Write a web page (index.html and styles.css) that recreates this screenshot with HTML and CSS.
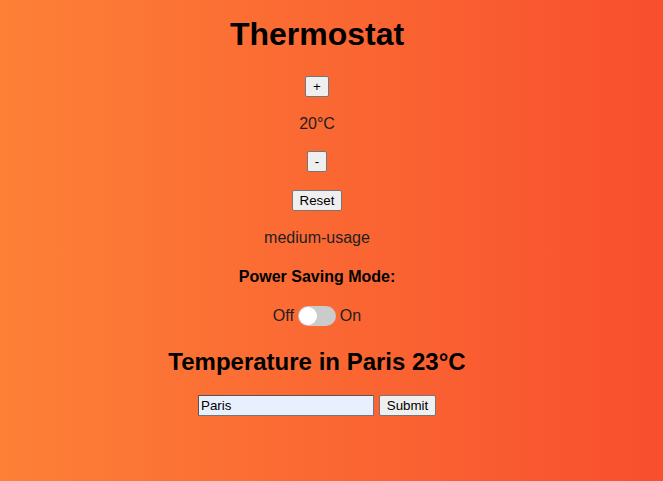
FILE: index.html
```html
<!DOCTYPE html>
<html lang="en">
<head>
<meta charset="utf-8">
<title>Thermostat</title>
<link rel="stylesheet" href="styles.css">
</head>
<body>
<div class="app">
  <h1 class="title">Thermostat</h1>
  <button class="btn btn-plus" type="button">+</button>
  <p class="temp">20°C</p>
  <button class="btn btn-minus" type="button">-</button>
  <button class="btn btn-reset" type="button">Reset</button>
  <p class="usage">medium-usage</p>
  <p class="mode-label">Power Saving Mode:</p>
  <div class="toggle-row">
    <span class="toggle-text">Off</span>
    <span class="switch"><span class="knob"></span></span>
    <span class="toggle-text">On</span>
  </div>
  <h2 class="city-temp">Temperature in Paris 23°C</h2>
  <form class="city-form">
    <input class="city-input" type="text" value="Paris">
    <button class="btn btn-submit" type="button">Submit</button>
  </form>
</div>
</body>
</html>
```
FILE: styles.css
```css
html, body {
  margin: 0;
  padding: 0;
}
body {
  min-height: 100vh;
  background: linear-gradient(to right, #fd8037, #f84f2e);
  font-family: "Liberation Sans", Arial, sans-serif;
  color: #1e1e1e;
}
.app {
  display: flex;
  flex-direction: column;
  align-items: center;
  padding-right: 29px;
  padding-top: 16px;
}
.title {
  margin: 0 0 23px;
  font-size: 32px;
  line-height: 37px;
  font-weight: bold;
  color: #000;
}
.btn {
  font-family: "Liberation Sans", Arial, sans-serif;
  font-size: 13.333px;
  line-height: 15px;
  height: 21px;
  box-sizing: border-box;
  padding: 1px 6px;
  margin: 0;
  color: #000;
  background: #efefef;
  border: 1px solid #767676;
  border-radius: 2px;
}
.btn-plus { width: 24px; padding: 1px 0; }
.btn-minus { width: 20px; padding: 1px 0; margin-top: 18px; }
.btn-reset { width: 50px; padding: 1px 0; margin-top: 18px; }
.temp {
  margin: 18px 0 0;
  font-size: 16px;
  line-height: 18px;
}
.usage {
  margin: 18px 0 0;
  font-size: 16px;
  line-height: 18px;
}
.mode-label {
  margin: 21px 0 0;
  font-size: 16px;
  line-height: 18px;
  font-weight: bold;
  color: #000;
}
.toggle-row {
  margin-top: 20px;
  display: flex;
  align-items: center;
  gap: 4px;
  height: 20px;
}
.toggle-text {
  font-size: 16px;
  line-height: 18px;
}
.switch {
  position: relative;
  display: block;
  width: 38px;
  height: 20px;
  border-radius: 10px;
  background: #cbcbcb;
}
.knob {
  position: absolute;
  left: 1px;
  top: 1px;
  width: 18px;
  height: 18px;
  border-radius: 50%;
  background: #fff;
}
.city-temp {
  margin: 22px 0 0;
  font-size: 24px;
  line-height: 28px;
  font-weight: bold;
  color: #000;
}
.city-form {
  margin: 19px 0 0;
  display: flex;
  align-items: center;
  gap: 5px;
}
.city-input {
  width: 176px;
  height: 21px;
  box-sizing: border-box;
  margin: 0;
  padding: 1px 2px;
  font-family: "Liberation Sans", Arial, sans-serif;
  font-size: 13.333px;
  color: #000;
  background: #e8f0fe;
  border: 1px solid #767676;
  border-top-color: #555;
  border-left-color: #555;
}
.btn-submit { width: 57px; padding: 1px 0; }
```
